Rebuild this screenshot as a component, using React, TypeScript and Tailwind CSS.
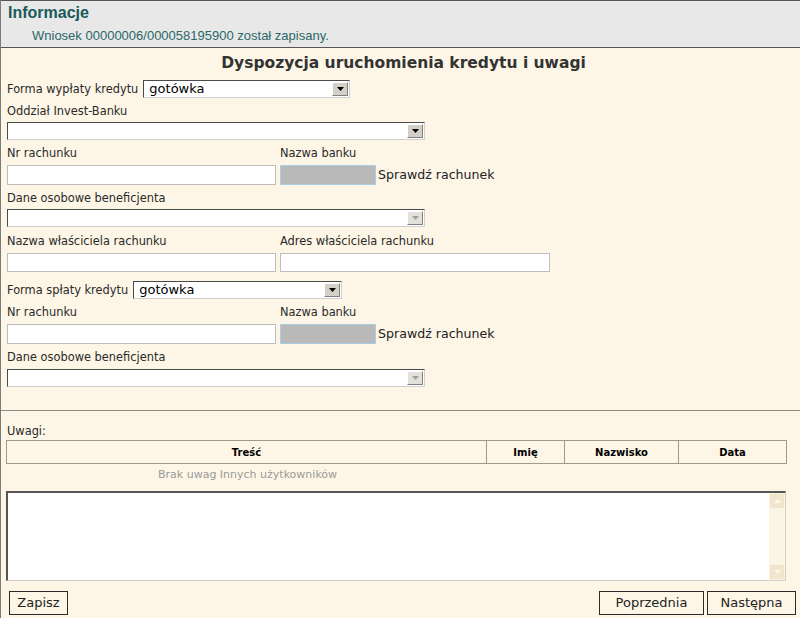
const verdana = "font-['DejaVu_Sans',Verdana,sans-serif]";

function SelectBox({ width, value, disabled }: { width: string; value?: string; disabled?: boolean }) {
  return (
    <div
      className={`${width} h-[18px] flex items-stretch bg-white border-t border-l border-[#4a4a4a] border-r border-b border-r-[#d0d0d0] border-b-[#d0d0d0]`}
    >
      <div className={`flex-1 pl-[5px] text-[13px] leading-[16px] text-black ${verdana}`}>{value}</div>
      <div
        className={`w-[16px] my-[1px] mr-[1px] flex items-center justify-center border border-t-white border-l-white border-r-[#808080] border-b-[#808080] ${
          disabled ? "bg-[#e4e1da]" : "bg-[#d4d0c8]"
        }`}
      >
        <svg width="7" height="4" viewBox="0 0 7 4">
          <path d="M0 0h7L3.5 4z" fill={disabled ? "#a0a0a0" : "#000"} />
        </svg>
      </div>
    </div>
  );
}

function TextBox({ width }: { width: string }) {
  return <div className={`${width} h-full bg-white border border-[#bdbdbd]`} />;
}

function BankBox() {
  return (
    <div className="flex items-center h-full">
      <div className="w-[96px] h-full ml-[4px] bg-[#b9b9b9] border border-[#a9cde2]" />
      <span className={`ml-[2px] text-[12.6px] text-[#222] ${verdana}`}>Sprawdź rachunek</span>
    </div>
  );
}

function Label({ children, className = "" }: { children: React.ReactNode; className?: string }) {
  return <div className={`text-[11.4px] leading-[14px] text-[#2a2a2a] ${verdana} ${className}`}>{children}</div>;
}

export default function App() {
  return (
    <div className="w-[800px] h-[618px] overflow-hidden bg-[#fdf6e6] border-l border-[#7a7a7a]">
      <div className="h-[48px] bg-[#e8e8e8] border-t border-b border-[#555]">
        <div className="pl-[7px] pt-[2px] text-[16px] leading-[20px] font-bold text-[#195a5a] font-['Liberation_Sans',Arial,sans-serif]">
          Informacje
        </div>
        <div className="pl-[31px] pt-[5px] text-[13px] leading-[16px] text-[#2a6767] font-['Liberation_Sans',Arial,sans-serif]">
          Wniosek 00000006/000058195900 został zapisany.
        </div>
      </div>

      <div className="pl-[6px]">
        <div className={`h-[30px] pt-[5px] text-center text-[15.5px] leading-[20px] font-bold text-[#333] ${verdana}`}>
          Dyspozycja uruchomienia kredytu i uwagi
        </div>

        <div className="mt-[1px] h-[19px] flex items-center gap-[5px]">
          <Label>Forma wypłaty kredytu</Label>
          <SelectBox width="w-[207px]" value="gotówka" />
        </div>

        <Label className="mt-[6px]">Oddział Invest-Banku</Label>
        <div className="mt-[4px]">
          <SelectBox width="w-[418px]" />
        </div>

        <div className="mt-[6px] flex">
          <Label className="w-[273px]">Nr rachunku</Label>
          <Label>Nazwa banku</Label>
        </div>
        <div className="mt-[5px] h-[20px] flex">
          <TextBox width="w-[269px]" />
          <BankBox />
        </div>

        <Label className="mt-[6px]">Dane osobowe beneficjenta</Label>
        <div className="mt-[4px]">
          <SelectBox width="w-[418px]" disabled />
        </div>

        <div className="mt-[7px] flex">
          <Label className="w-[273px]">Nazwa właściciela rachunku</Label>
          <Label>Adres właściciela rachunku</Label>
        </div>
        <div className="mt-[5px] h-[19px] flex gap-[4px]">
          <TextBox width="w-[269px]" />
          <TextBox width="w-[270px]" />
        </div>

        <div className="mt-[9px] h-[18px] flex items-center gap-[5px]">
          <Label>Forma spłaty kredytu</Label>
          <SelectBox width="w-[209px]" value="gotówka" />
        </div>

        <div className="mt-[6px] flex">
          <Label className="w-[273px]">Nr rachunku</Label>
          <Label>Nazwa banku</Label>
        </div>
        <div className="mt-[5px] h-[20px] flex">
          <TextBox width="w-[269px]" />
          <BankBox />
        </div>

        <Label className="mt-[6px]">Dane osobowe beneficjenta</Label>
        <div className="mt-[5px]">
          <SelectBox width="w-[418px]" disabled />
        </div>
      </div>

      <div className="mt-[23px] border-t border-[#8a8a8a]" />

      <div className="pl-[5px]">
        <Label className="mt-[13px] pl-[1px]">Uwagi:</Label>
        <div
          className={`mt-[2px] w-[781px] h-[24px] flex border border-[#a09a8e] text-[10px] font-bold text-black ${verdana}`}
        >
          <div className="w-[480px] flex items-center justify-center border-r border-[#a09a8e]">Treść</div>
          <div className="w-[78px] flex items-center justify-center border-r border-[#a09a8e]">Imię</div>
          <div className="w-[114px] flex items-center justify-center border-r border-[#a09a8e]">Nazwisko</div>
          <div className="flex-1 flex items-center justify-center">Data</div>
        </div>
        <div className={`mt-[4px] h-[14px] pl-[152px] text-[11px] leading-[14px] text-[#9a9a9a] ${verdana}`}>
          Brak uwag Innych użytkowników
        </div>

        <div className="mt-[9px] w-[780px] h-[90px] flex bg-white border-t-2 border-l-2 border-[#555] border-r border-b border-r-[#d4d0c8] border-b-[#d4d0c8]">
          <div className="flex-1" />
          <div className="w-[16px] flex flex-col justify-between bg-[#fbf5e6]">
            <div className="h-[16px] flex items-center justify-center bg-[#f1e6cc] border border-[#fbf3e2]">
              <svg width="7" height="4" viewBox="0 0 7 4">
                <path d="M0 4h7L3.5 0z" fill="#fdf8ee" />
              </svg>
            </div>
            <div className="h-[16px] flex items-center justify-center bg-[#f1e6cc] border border-[#fbf3e2]">
              <svg width="7" height="4" viewBox="0 0 7 4">
                <path d="M0 0h7L3.5 4z" fill="#fdf8ee" />
              </svg>
            </div>
          </div>
        </div>

        <div className={`mt-[10px] flex text-[13px] text-[#222] ${verdana}`}>
          <button className="ml-[3px] w-[59px] h-[24px] border border-[#2a2a2a] bg-[#fdf6e6]">Zapisz</button>
          <div className="flex-1" />
          <button className="w-[105px] h-[24px] border border-[#2a2a2a] bg-[#fdf6e6]">Poprzednia</button>
          <button className="ml-[3px] mr-[4px] w-[89px] h-[24px] border border-[#2a2a2a] bg-[#fdf6e6]">Następna</button>
        </div>
      </div>
    </div>
  );
}
